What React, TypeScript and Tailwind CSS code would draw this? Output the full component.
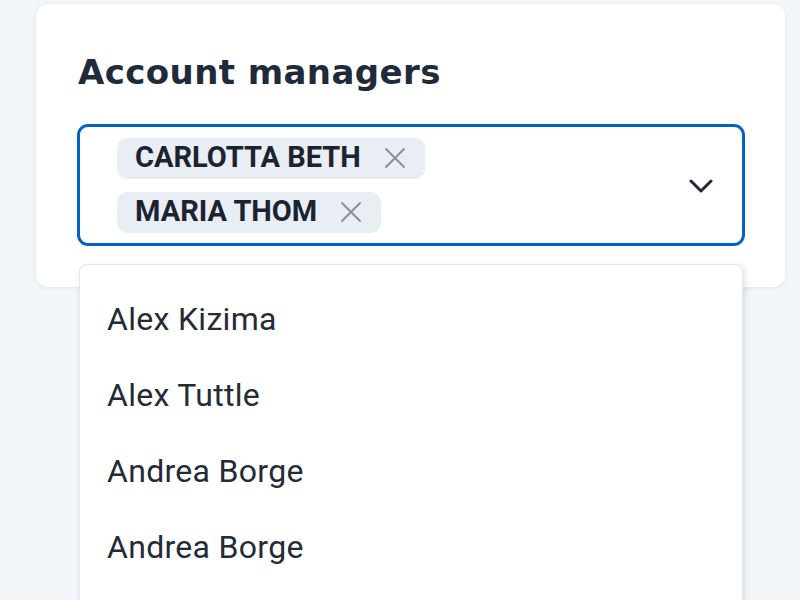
const selected = ["CARLOTTA BETH", "MARIA THOM"];
const options = ["Alex Kizima", "Alex Tuttle", "Andrea Borge", "Andrea Borge"];

function Chip({ label }: { label: string }) {
  return (
    <span className="flex h-[41px] items-center gap-[23px] rounded-[10px] bg-[#e9edf4] pl-[18px] pr-[19px]">
      <span className="text-[29px] font-bold text-[#1b2230]">{label}</span>
      <svg width="22" height="22" viewBox="0 0 22 22" className="text-[#8a8f98]">
        <path d="M2 2 20 20M20 2 2 20" stroke="currentColor" strokeWidth="2" strokeLinecap="round" />
      </svg>
    </span>
  );
}

export default function App() {
  return (
    <div className="h-[600px] w-[800px] overflow-hidden bg-[#f3f6f9] pl-[36px] pt-[4px] font-['Roboto',sans-serif]">
      <div className="relative h-[283px] w-[749px] rounded-[12px] bg-white pl-[41px] pr-[40px] pt-[46px] shadow-[0_1px_4px_rgba(15,23,42,0.08)]">
        <h2 className="pl-[1px] font-['DejaVu_Sans',sans-serif] text-[34px] font-bold leading-[44px] tracking-[0.4px] text-[#1f2a3b]">
          Account managers
        </h2>
        <div className="relative mt-[30px]">
          <div className="flex h-[122px] items-center rounded-[11px] border-[3px] border-[#0063c4] bg-white pl-[37px] pr-[32px]">
            <div className="flex flex-1 flex-col items-start gap-[13px]">
              {selected.map((s) => (
                <Chip key={s} label={s} />
              ))}
            </div>
            <svg width="24" height="16" viewBox="0 0 24 16" className="-mr-[3px] mt-[2px] text-[#1f2937]">
              <path d="M2 3 12 13 22 3" fill="none" stroke="currentColor" strokeWidth="3" strokeLinecap="round" strokeLinejoin="round" />
            </svg>
          </div>
          <div className="absolute left-[2px] right-[2px] top-[140px] h-[400px] rounded-[8px] border border-[#e3e8ef] bg-white pt-[16px] shadow-[2px_2px_6px_rgba(15,23,42,0.12)]">
            {options.map((o, i) => (
              <div key={i} className="flex h-[76px] items-center pl-[27px] text-[32px] tracking-[0.3px] text-[#252b36]">
                {o}
              </div>
            ))}
          </div>
        </div>
      </div>
    </div>
  );
}
